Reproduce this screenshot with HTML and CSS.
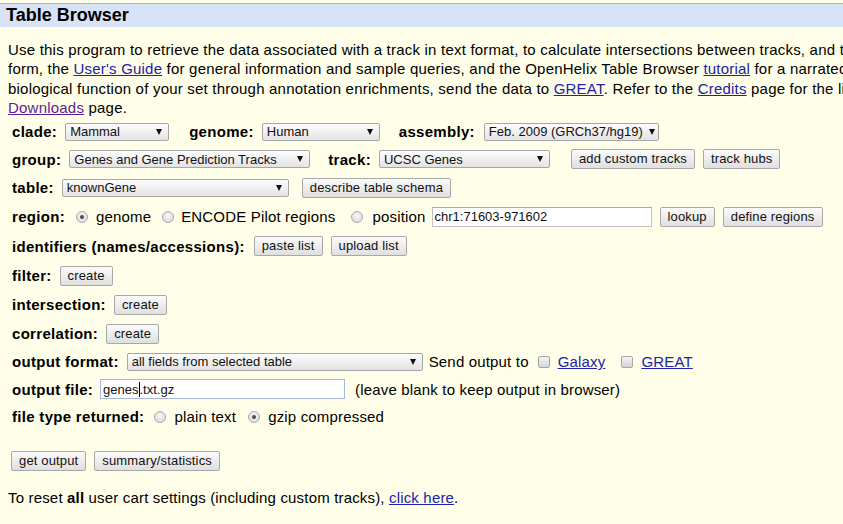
FILE: index.html
```html
<!DOCTYPE html>
<html lang="en">
<head>
<meta charset="utf-8">
<title>Table Browser</title>
<link rel="stylesheet" href="styles.css">
</head>
<body>
<header class="title-bar"><h1>Table Browser</h1></header>
<main class="content">
  <p class="intro">
    Use this program to retrieve the data associated with a track in text format, to calculate intersections between tracks, and to retrieve DNA sequence covered by a track. For help in using this application see <a href="#">Using the Table Browser</a> for a description of the controls in this<br>
    form, the <a href="#">User's Guide</a> for general information and sample queries, and the OpenHelix Table Browser <a href="#">tutorial</a> for a narrated presentation of the software features and usage. For more complex queries, you may want to use <a href="#">Galaxy</a> or our <a href="#">public MySQL server</a>. To examine the<br>
    biological function of your set through annotation enrichments, send the data to <a href="#">GREAT</a>. Refer to the <a href="#">Credits</a> page for the list of contributors and usage restrictions associated with these data. All tables can be downloaded in their entirety from the <a class="visited" href="#">Sequence and Annotation</a><br>
    <a class="visited" href="#">Downloads</a> page.
  </p>

  <form class="tb-form">
    <div class="row row--h27">
      <span class="lbl">clade:</span>
      <span class="select w-clade ml8"><span>Mammal</span><span class="caret"></span></span>
      <span class="lbl ml20">genome:</span>
      <span class="select w-genome ml8"><span>Human</span><span class="caret"></span></span>
      <span class="lbl ml19">assembly:</span>
      <span class="select w-assembly ml9"><span>Feb. 2009 (GRCh37/hg19)</span><span class="caret"></span></span>
    </div>
    <div class="row row--h28">
      <span class="lbl">group:</span>
      <span class="select w-group ml8"><span>Genes and Gene Prediction Tracks</span><span class="caret"></span></span>
      <span class="lbl ml18">track:</span>
      <span class="select w-track ml8"><span>UCSC Genes</span><span class="caret"></span></span>
      <button type="button" class="btn ml21">add custom tracks</button>
      <button type="button" class="btn ml8">track hubs</button>
    </div>
    <div class="row">
      <span class="lbl">table:</span>
      <span class="select w-table ml8"><span>knownGene</span><span class="caret"></span></span>
      <button type="button" class="btn ml13">describe table schema</button>
    </div>
    <div class="row">
      <span class="lbl">region:</span>
      <span class="radio checked ml11"></span><span class="ml8">genome</span>
      <span class="radio ml11"></span><span class="ml7">ENCODE Pilot regions</span>
      <span class="radio ml16"></span><span class="ml9">position</span>
      <span class="field w-position ml6">chr1:71603-971602</span>
      <button type="button" class="btn ml8">lookup</button>
      <button type="button" class="btn ml8">define regions</button>
    </div>
    <div class="row row--h30">
      <span class="lbl">identifiers (names/accessions):</span>
      <button type="button" class="btn ml9">paste list</button>
      <button type="button" class="btn ml8">upload list</button>
    </div>
    <div class="row">
      <span class="lbl">filter:</span>
      <button type="button" class="btn ml8">create</button>
    </div>
    <div class="row">
      <span class="lbl">intersection:</span>
      <button type="button" class="btn ml8">create</button>
    </div>
    <div class="row">
      <span class="lbl">correlation:</span>
      <button type="button" class="btn ml8">create</button>
    </div>
    <div class="row row--h27">
      <span class="lbl">output format:</span>
      <span class="select w-format ml8"><span>all fields from selected table</span><span class="caret"></span></span>
      <span class="ml6">Send output to</span>
      <span class="checkbox ml9"></span>
      <a href="#" class="ml8">Galaxy</a>
      <span class="checkbox ml16"></span>
      <a href="#" class="ml8">GREAT</a>
    </div>
    <div class="row row--h28">
      <span class="lbl">output file:</span>
      <span class="field focus w-file ml7">genes<span class="text-caret"></span>.txt.gz</span>
      <span class="ml10">(leave blank to keep output in browser)</span>
    </div>
    <div class="row row--h27">
      <span class="lbl">file type returned:</span>
      <span class="radio ml10"></span><span class="ml8">plain text</span>
      <span class="radio checked ml12"></span><span class="ml8">gzip compressed</span>
    </div>
  </form>

  <div class="actions">
    <button type="button" class="btn">get output</button>
    <button type="button" class="btn">summary/statistics</button>
  </div>

  <p class="reset">To reset <b>all</b> user cart settings (including custom tracks), <a href="#">click here</a>.</p>
</main>
</body>
</html>
```
FILE: styles.css
```css
html, body {
  margin: 0;
  background: #fffee8;
  color: #000;
  font-family: "Liberation Sans", Arial, sans-serif;
  overflow: hidden;
}

.title-bar {
  margin-top: 3px;
  border-top: 1px solid #c3b38a;
  height: 23px;
  background: #d9e3f7;
  padding-left: 6px;
}

.title-bar h1 {
  margin: 0;
  font-size: 18px;
  line-height: 23px;
  font-weight: bold;
}

.content {
  padding-left: 8px;
}

a {
  color: #2222a8;
  text-decoration: underline;
}

a.visited {
  color: #5b1f98;
}

.intro {
  margin: 13px 0 0;
  font-size: 15px;
  line-height: 19.3px;
  letter-spacing: 0.21px;
  white-space: nowrap;
}

.tb-form {
  margin-top: 1px;
  padding-left: 4px;
}

.row {
  height: 29px;
  display: flex;
  align-items: center;
  font-size: 15px;
  letter-spacing: 0.17px;
  white-space: nowrap;
}

.row--h26 { height: 26px; }
.row--h27 { height: 27px; }
.row--h28 { height: 28px; }
.row--h30 { height: 30px; }

.lbl {
  font-weight: bold;
  letter-spacing: 0.3px;
}

.btn {
  height: 20px;
  box-sizing: border-box;
  margin: 0;
  padding: 0 7px;
  border: 1px solid #a8a8a8;
  border-radius: 2px;
  background: linear-gradient(#fbfbfb, #dfdfdf);
  color: #111;
  font: 13px "Liberation Sans", Arial, sans-serif;
  letter-spacing: 0.15px;
  line-height: 18px;
}

.select {
  display: inline-flex;
  align-items: center;
  justify-content: space-between;
  box-sizing: border-box;
  height: 18px;
  padding: 0 6px 0 4px;
  border: 1px solid #a6a6a6;
  border-radius: 2px;
  background: linear-gradient(#fdfdfd, #e3e3e3);
  color: #111;
  font-size: 13px;
  letter-spacing: 0;
}

.caret {
  flex-shrink: 0;
  margin-left: 6px;
  width: 0;
  height: 0;
  border-left: 3.5px solid transparent;
  border-right: 3.5px solid transparent;
  border-top: 6px solid #111;
}

.w-clade { width: 104px; }
.w-genome { width: 118px; }
.w-assembly { width: 175px; }
.w-group { width: 241px; }
.w-track { width: 171px; }
.w-table { width: 227px; }
.w-format { width: 296px; }

.field {
  display: inline-flex;
  align-items: center;
  box-sizing: border-box;
  height: 20px;
  padding: 0 2px;
  border: 1px solid #c4c4c4;
  border-top-color: #a9a9a9;
  background: #fff;
  color: #111;
  font-size: 13px;
  letter-spacing: 0;
}

.field.focus {
  border-color: #a9b8d6;
}

.w-position { width: 220px; }
.w-file { width: 245px; }

.text-caret {
  display: inline-block;
  width: 1px;
  height: 15px;
  background: #000;
}

.radio {
  width: 12px;
  height: 12px;
  box-sizing: border-box;
  border: 1px solid #ababab;
  border-radius: 50%;
  background: radial-gradient(circle at 50% 40%, #f6f6f6, #d6d6d6);
  display: inline-flex;
  align-items: center;
  justify-content: center;
}

.radio.checked::after {
  content: "";
  width: 4px;
  height: 4px;
  border-radius: 50%;
  background: #4a4a4a;
}

.checkbox {
  width: 12px;
  height: 12px;
  box-sizing: border-box;
  border: 1px solid #a6a6a6;
  border-radius: 2px;
  background: linear-gradient(#f4f4f4, #d4d4d4);
}

.ml6 { margin-left: 6px; }
.ml7 { margin-left: 7px; }
.ml8 { margin-left: 8px; }
.ml9 { margin-left: 9px; }
.ml10 { margin-left: 10px; }
.ml11 { margin-left: 11px; }
.ml12 { margin-left: 12px; }
.ml13 { margin-left: 13px; }
.ml16 { margin-left: 16px; }
.ml18 { margin-left: 18px; }
.ml19 { margin-left: 19px; }
.ml20 { margin-left: 20px; }
.ml21 { margin-left: 21px; }

.actions {
  margin-top: 21px;
  padding-left: 3px;
  display: flex;
  gap: 8px;
}

.reset {
  margin: 17px 0 0;
  font-size: 15px;
  line-height: 19px;
  letter-spacing: 0.17px;
}
```
